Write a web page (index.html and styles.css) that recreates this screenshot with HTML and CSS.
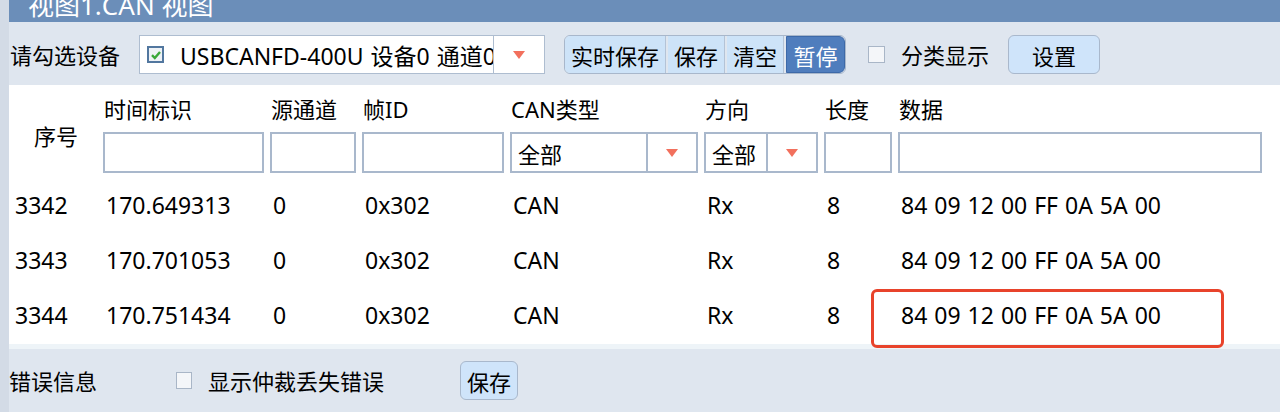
FILE: index.html
```html
<!DOCTYPE html>
<html lang="zh-CN">
<head>
<meta charset="utf-8">
<title>CAN 视图</title>
<link rel="stylesheet" href="styles.css">
</head>
<body>
<div class="app">
  <div class="strip"></div>
  <div class="main">
    <div class="titlebar"><span class="title-text">视图1.CAN 视图</span></div>

    <div class="toolbar">
      <span class="label">请勾选设备</span>
      <div class="device-combo">
        <span class="chk checked">
          <svg width="12" height="12" viewBox="0 0 12 12"><path d="M2 6.2 L4.8 9 L10 3" fill="none" stroke="#3aa83a" stroke-width="2.4"/></svg>
        </span>
        <span class="device-text">USBCANFD-400U 设备0 通道0</span>
        <span class="drop"><span class="tri"></span></span>
      </div>
      <div class="btn-group">
        <span class="gbtn w4">实时保存</span>
        <span class="gbtn w2">保存</span>
        <span class="gbtn w2">清空</span>
        <span class="gbtn active">暂停</span>
      </div>
      <span class="chk plain"></span>
      <span class="label cls">分类显示</span>
      <span class="btn set">设置</span>
    </div>

    <div class="table">
      <div class="grid head">
        <div class="h-seq">序号</div>
        <div class="hl">时间标识</div>
        <div class="hl">源通道</div>
        <div class="hl">帧ID</div>
        <div class="hl">CAN类型</div>
        <div class="hl">方向</div>
        <div class="hl">长度</div>
        <div class="hl">数据</div>
        <div class="inp first"></div>
        <div class="inp"></div>
        <div class="inp"></div>
        <div class="inp combo"><span class="ctext">全部</span><span class="cdrop"><span class="tri"></span></span></div>
        <div class="inp combo"><span class="ctext">全部</span><span class="cdrop"><span class="tri"></span></span></div>
        <div class="inp"></div>
        <div class="inp"></div>
      </div>

      <div class="grid row">
        <div class="c0">3342</div><div class="c">170.649313</div><div class="c">0</div><div class="c">0x302</div><div class="c">CAN</div><div class="c">Rx</div><div class="c">8</div><div class="c">84 09 12 00 FF 0A 5A 00</div>
      </div>
      <div class="grid row">
        <div class="c0">3343</div><div class="c">170.701053</div><div class="c">0</div><div class="c">0x302</div><div class="c">CAN</div><div class="c">Rx</div><div class="c">8</div><div class="c">84 09 12 00 FF 0A 5A 00</div>
      </div>
      <div class="grid row">
        <div class="c0">3344</div><div class="c">170.751434</div><div class="c">0</div><div class="c">0x302</div><div class="c">CAN</div><div class="c">Rx</div><div class="c">8</div><div class="c">84 09 12 00 FF 0A 5A 00</div>
      </div>
      <div class="highlight"></div>
    </div>
    <div class="tstripe"></div>

    <div class="errbar">
      <span class="label">错误信息</span>
      <span class="chk plain err"></span>
      <span class="label">显示仲裁丢失错误</span>
      <span class="btn save">保存</span>
    </div>
  </div>
</div>
</body>
</html>
```
FILE: styles.css
```css
* { box-sizing: border-box; }
html, body { margin: 0; padding: 0; }
body {
  width: 1280px;
  height: 416px;
  overflow: hidden;
  background: #ffffff;
  font-family: "Noto Sans", "Noto Sans CJK SC", sans-serif;
  font-size: 22px;
  color: #000;
}
.app { display: flex; height: 416px; }
.strip { width: 9px; background: #d3dbe6; height: 412px; }
.main { flex: 1; display: flex; flex-direction: column; }

.titlebar {
  height: 22px;
  background: #6b8eb9;
  overflow: hidden;
  padding-left: 19px;
}
.title-text {
  display: block;
  color: #ffffff;
  line-height: 30px;
  margin-top: -10px;
  font-size: 26px;
  white-space: nowrap;
}

.toolbar {
  height: 63px;
  background: #dfe6ef;
  display: flex;
  align-items: center;
  padding-left: 1px;
  padding-top: 2px;
}
.label { white-space: nowrap; line-height: 28px; }
.device-combo {
  margin-left: 19px;
  width: 406px;
  height: 39px;
  background: #fff;
  border: 1px solid #aebdd0;
  display: flex;
  align-items: center;
  flex: none;
}
.chk {
  width: 17px;
  height: 17px;
  border: 1px solid #a9b6c7;
  background: #f4f6f9;
  display: inline-flex;
  align-items: center;
  justify-content: center;
  flex: none;
}
.chk.checked {
  border: 2px solid #52779f;
  background: #eef2f6;
  margin-left: 7px;
}
.device-text {
  margin-left: 16px;
  width: 313px;
  overflow: hidden;
  white-space: nowrap;
  font-size: 23px;
  word-spacing: 1px;
}
.drop {
  width: 51px;
  height: 100%;
  border-left: 1px solid #aebdd0;
  display: flex;
  align-items: center;
  justify-content: center;
}
.tri {
  width: 0; height: 0;
  border-left: 6px solid transparent;
  border-right: 6px solid transparent;
  border-top: 8px solid #f2705d;
}
.btn-group {
  margin-left: 19px;
  display: flex;
  height: 39px;
  border: 1px solid #a8b7cb;
  border-radius: 6px;
  overflow: hidden;
  background: #dfe6ef;
  gap: 2px;
  flex: none;
}
.gbtn {
  background: #cde3f8;
  display: flex;
  align-items: center;
  justify-content: center;
  border-right: 1px solid #b4c3d6;
}
.gbtn.w4 { width: 101px; }
.gbtn.w2 { width: 57px; }
.gbtn.active {
  width: 59px;
  background: #4f7dbd;
  color: #fff;
  border: 1px solid #3d69a8;
  border-radius: 0 6px 6px 0;
}
.chk.plain { margin-left: 22px; }
.cls { margin-left: 16px; }
.btn {
  display: flex;
  align-items: center;
  justify-content: center;
  background: #cfe4fa;
  border: 1px solid #a9b8cc;
  border-radius: 6px;
  height: 39px;
  flex: none;
}
.set { margin-left: 19px; width: 92px; }

.table {
  position: relative;
  height: 259px;
  background: #fff;
  padding-top: 10px;
}
.grid {
  display: grid;
  grid-template-columns: 88px 161px 86px 142px 188px 114px 68px 364px;
  column-gap: 6px;
}
.head { grid-template-rows: 28px 41px; row-gap: 9px; }
.h-seq { grid-row: 1 / 3; grid-column: 1; align-self: center; padding-left: 25px; padding-top: 2px; }
.hl { line-height: 28px; padding-left: 1px; white-space: nowrap; }
.inp { border: 2px solid #a9b8cc; background: #fff; }
.inp.first { grid-column: 2; }
.combo { display: flex; align-items: center; }
.ctext { flex: 1; padding-left: 6px; }
.cdrop {
  width: 50px; height: 100%;
  border-left: 2px solid #a9b8cc;
  display: flex; align-items: center; justify-content: center;
}
.row { height: 55px; align-items: center; font-size: 23px; }
.head + .row { margin-top: 4px; }
.c0 { padding-left: 6px; }
.c { padding-left: 3px; white-space: nowrap; word-spacing: 1px; }
.highlight {
  position: absolute;
  left: 862px;
  top: 204px;
  width: 353px;
  height: 59px;
  border: 3px solid #e8432b;
  border-radius: 6px;
}
.tstripe { height: 5px; background: #eef4f8; }

.errbar {
  height: 63px;
  background: #dfe6ef;
  display: flex;
  align-items: center;
}
.chk.err { margin-left: 79px; width: 16px; height: 17px; margin-right: 16px; }
.save { margin-left: 76px; width: 58px; }
```
